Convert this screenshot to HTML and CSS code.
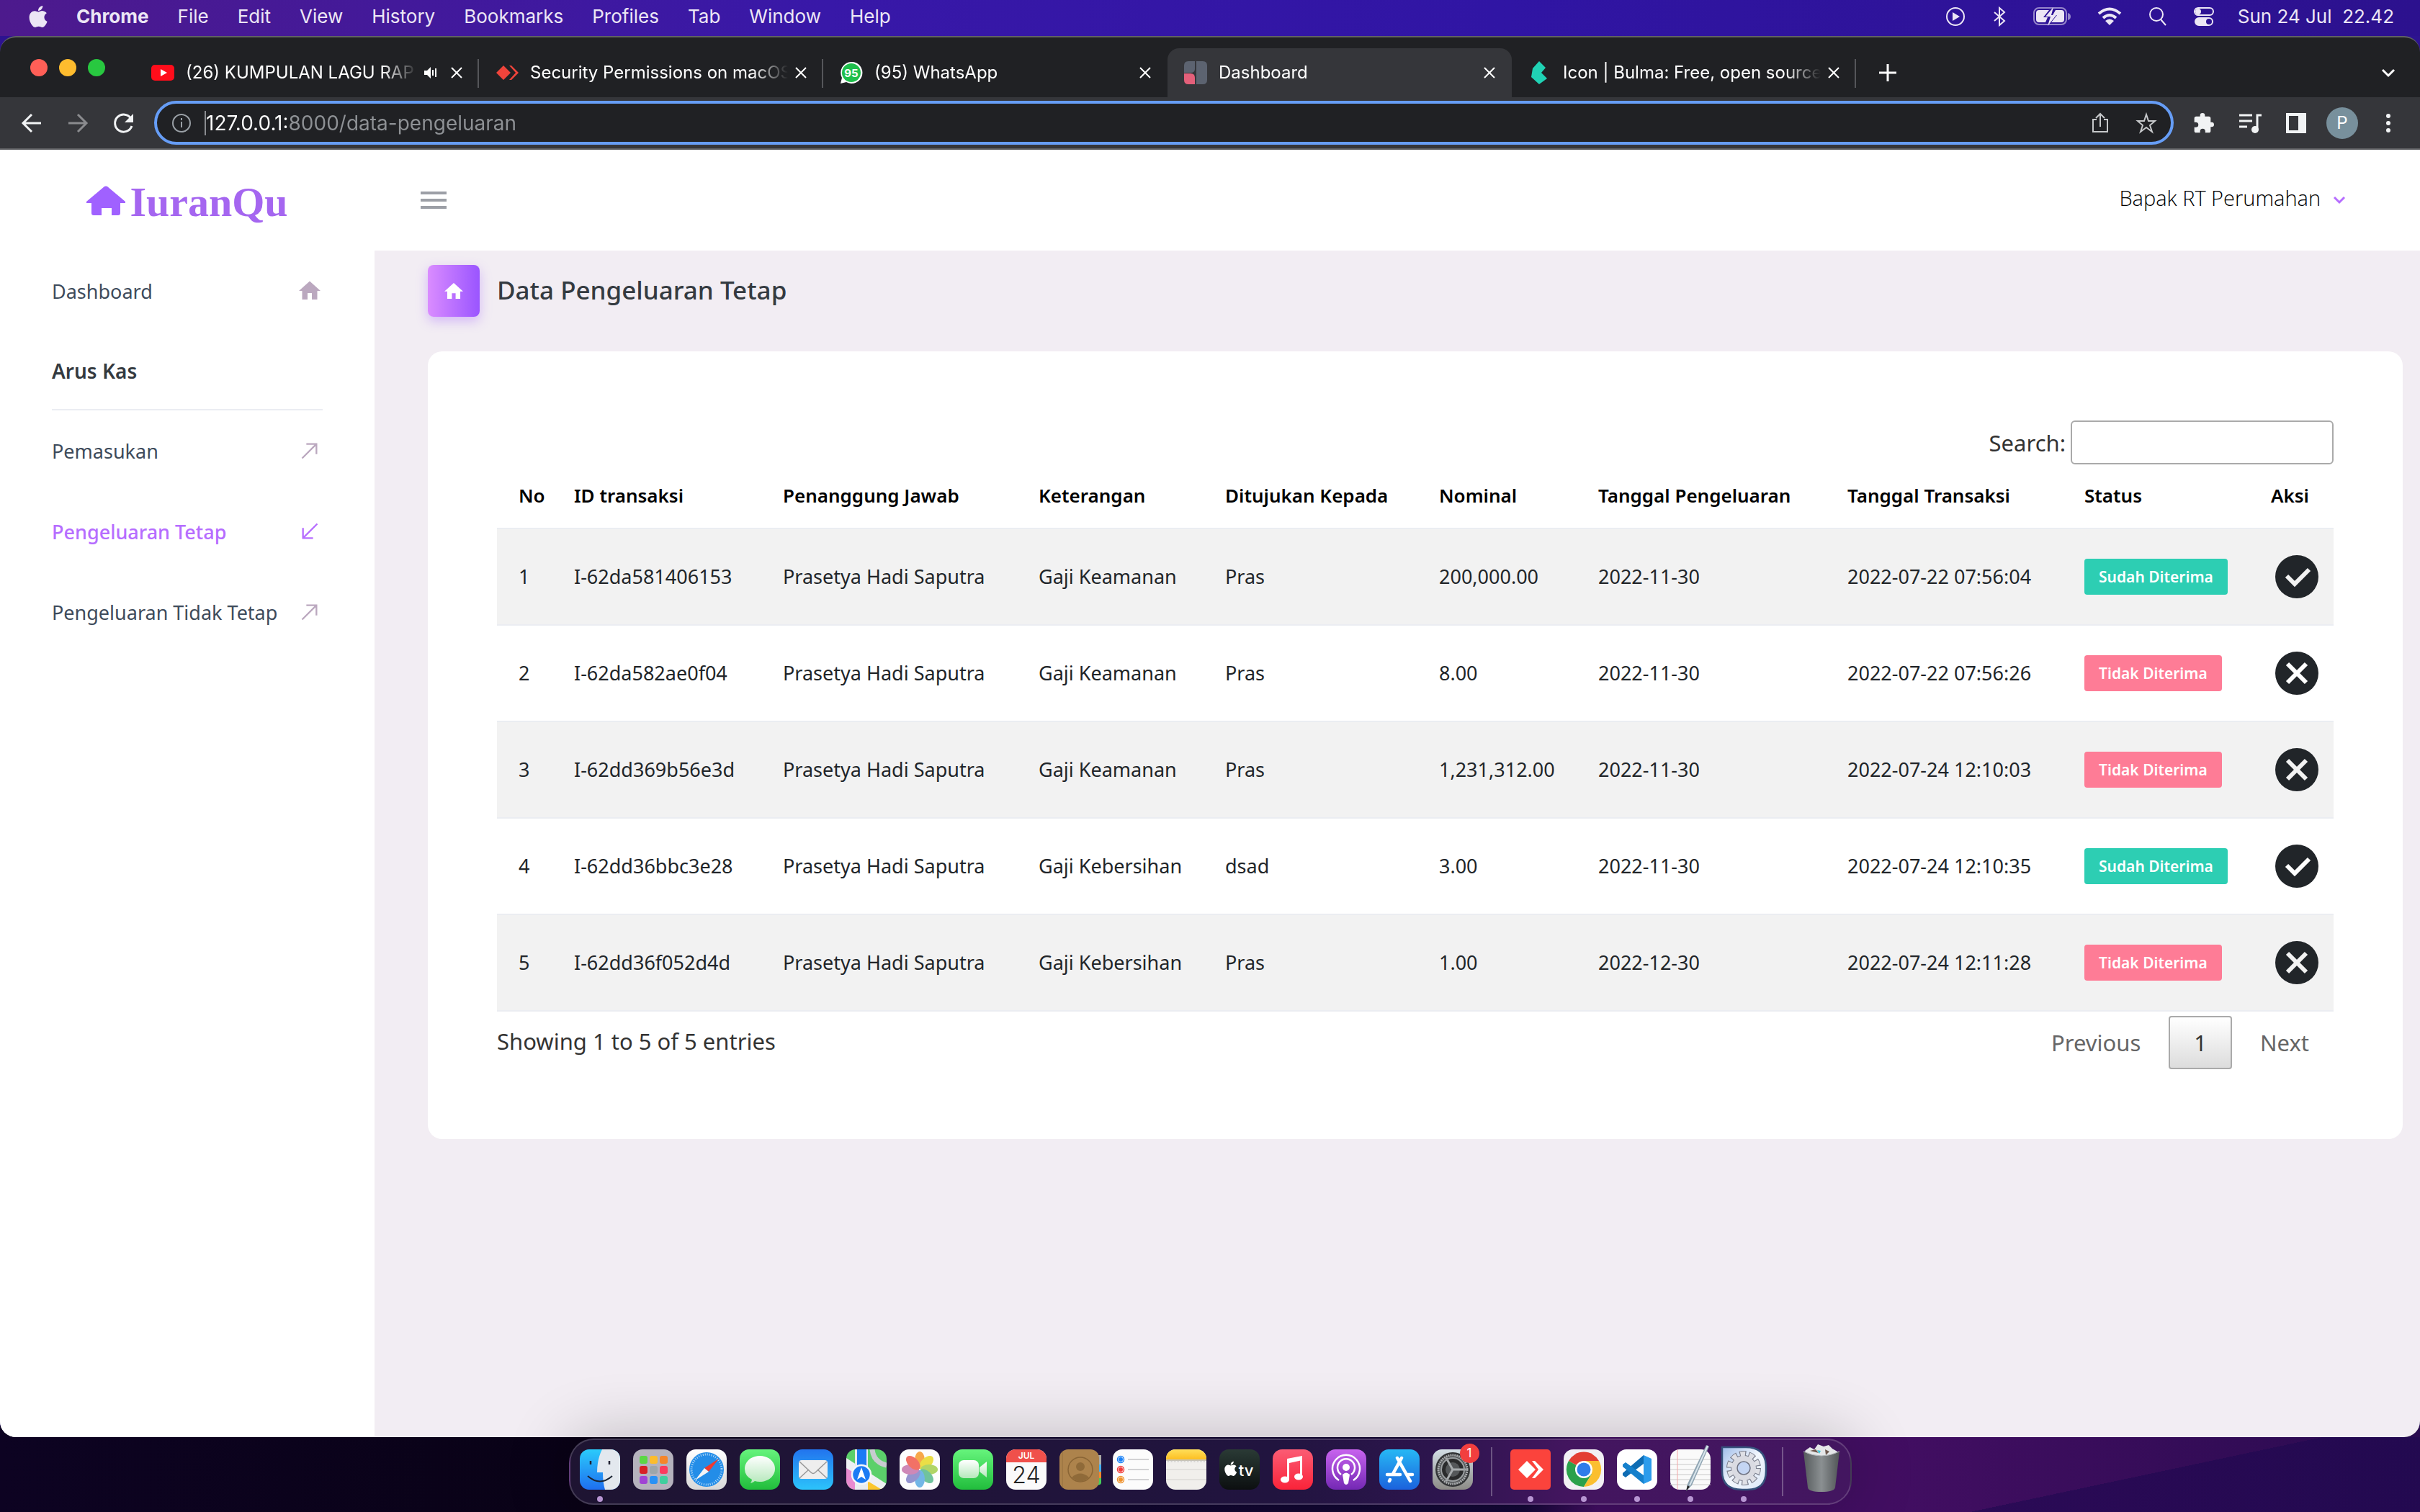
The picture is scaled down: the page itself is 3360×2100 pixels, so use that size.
FILE: index.html
```html
<!DOCTYPE html>
<html lang="id">
<head>
<meta charset="utf-8">
<title>Dashboard</title>
<link rel="stylesheet" href="styles.css">
</head>
<body>
<header class="menubar">
  <nav class="menus" aria-label="Menu bar">
    <svg class="apple" viewBox="0 0 384 480" aria-hidden="true"><path d="M319 252c0-37 16-64 50-85-19-27-47-42-84-45-35-3-74 21-88 21-15 0-49-20-76-20C66 124 6 168 6 257c0 26 5 54 14 82 13 37 59 127 107 125 25-1 43-18 76-18 32 0 48 18 76 18 49-1 90-82 102-119-65-31-62-90-62-93zM262 88c27-32 25-62 24-73-24 1-52 16-68 35-17 20-28 45-25 71 26 2 50-11 69-33z"/></svg>
    <button class="menu menu-app">Chrome</button>
    <button class="menu">File</button>
    <button class="menu">Edit</button>
    <button class="menu">View</button>
    <button class="menu">History</button>
    <button class="menu">Bookmarks</button>
    <button class="menu">Profiles</button>
    <button class="menu">Tab</button>
    <button class="menu">Window</button>
    <button class="menu">Help</button>
  </nav>
  <div class="status">
    <svg width="28" height="28" viewBox="0 0 28 28"><circle cx="14" cy="14" r="12" class="line"/><path d="M10 8l10 6-10 6z"/></svg>
    <svg width="20" height="28" viewBox="0 0 20 28"><path class="line" d="M3 8l14 12-7 6V2l7 6L3 20"/></svg>
    <svg width="52" height="28" viewBox="0 0 52 28"><rect x="1" y="2" width="45" height="23" rx="7" class="line dim"/><path class="dim-fill" d="M48 9q4 1 4 5t-4 5z"/><path d="M8 5h14l-8 10h6l-3 7H8q-4 0-4-4V9q0-4 4-4zM31 5h8q4 0 4 4v9q0 4-4 4H25l8-10h-6z"/><path d="M28 1L17 14h7l-4 13 12-15h-7z"/></svg>
    <svg width="34" height="26" viewBox="0 0 34 26"><path class="wave" d="M2 9q15-13 30 0M8 15q9-8 18 0"/><path d="M11 19q6-5 12 0l-6 6z"/></svg>
    <svg width="26" height="28" viewBox="0 0 26 28"><circle cx="11" cy="11" r="9" class="line"/><path class="line" d="M17 18l7 8"/></svg>
    <svg width="28" height="28" viewBox="0 0 28 28"><rect x="1" y="2" width="26" height="10" rx="5" class="line"/><circle cx="6" cy="7" r="4"/><path fill-rule="evenodd" d="M7 15h14a6 6 0 010 12H7a6 6 0 010-12zm14 2a4 4 0 100 8 4 4 0 000-8z"/></svg>
    <time class="clock">Sun 24 Jul&nbsp; 22.42</time>
  </div>
</header>

<div class="window">
  <div class="tabstrip">
    <div class="lights"><button class="light red" aria-label="Close"></button><button class="light amber" aria-label="Minimise"></button><button class="light green" aria-label="Zoom"></button></div>
    <div class="tabs">
      <div class="tab">
        <svg class="favicon" viewBox="0 0 32 32"><rect y="5" width="32" height="22" rx="5" fill="#ff0d1b"/><path d="M13 11l9 5-9 5z" fill="#fff"/></svg>
        <span class="tab-title">(26) KUMPULAN LAGU RAP</span>
        <svg class="speaker" viewBox="0 0 20 20"><path d="M1 7h4l5-5v16l-5-5H1z" fill="#fff"/><path d="M13 6v8M17 4v12" stroke="#fff" stroke-width="2"/></svg>
        <button class="close" aria-label="Close tab"><svg viewBox="0 0 20 20"><path d="M3 3l14 14M17 3L3 17"/></svg></button>
      </div>
      <div class="tab">
        <svg class="favicon" viewBox="0 0 32 32"><path d="M11 6l10 10-10 10L1 16zM19 6h3l10 10-10 10h-3l9-10z" fill="#ef443b"/></svg>
        <span class="tab-title">Security Permissions on macOS</span>
        <button class="close" aria-label="Close tab"><svg viewBox="0 0 20 20"><path d="M3 3l14 14M17 3L3 17"/></svg></button>
      </div>
      <div class="tab">
        <svg class="favicon" viewBox="0 0 32 32"><path d="M16 1a15 15 0 11-7 28l-8 2 2-8A15 15 0 0116 1z" fill="#fff"/><circle cx="16" cy="16" r="13" fill="#1fbf4c"/><text x="16" y="22" class="fav-count">95</text></svg>
        <span class="tab-title">(95) WhatsApp</span>
        <button class="close" aria-label="Close tab"><svg viewBox="0 0 20 20"><path d="M3 3l14 14M17 3L3 17"/></svg></button>
      </div>
      <div class="tab active">
        <svg class="favicon" viewBox="0 0 32 32"><path d="M6 0h9v11q0 5-6 5H0V6q0-6 6-6zM17 0h9q6 0 6 6v20q0 6-6 6h-9z" fill="#5c6370"/><path d="M0 17h9q6 0 6 6v9H6q-6 0-6-6z" fill="#e4607a"/></svg>
        <span class="tab-title">Dashboard</span>
        <button class="close" aria-label="Close tab"><svg viewBox="0 0 20 20"><path d="M3 3l14 14M17 3L3 17"/></svg></button>
      </div>
      <div class="tab">
        <svg class="favicon" viewBox="0 0 32 32"><path d="M6 10L15 0l9 9-6 7 8 8-11 8L4 22z" fill="#20d2b4"/></svg>
        <span class="tab-title">Icon | Bulma: Free, open source</span>
        <button class="close" aria-label="Close tab"><svg viewBox="0 0 20 20"><path d="M3 3l14 14M17 3L3 17"/></svg></button>
      </div>
    </div>
    <button class="strip-btn newtab" aria-label="New tab"><svg viewBox="0 0 24 24"><path d="M12 0v24M0 12h24"/></svg></button>
    <button class="strip-btn" aria-label="Search tabs"><svg viewBox="0 0 24 24"><path d="M4 8l8 8 8-8"/></svg></button>
  </div>

  <div class="toolbar">
    <button class="tool" aria-label="Back"><svg viewBox="0 0 32 32"><path d="M29 16H5M16 4L4 16l12 12"/></svg></button>
    <button class="tool faded" aria-label="Forward"><svg viewBox="0 0 32 32"><path d="M3 16h24M16 4l12 12-12 12"/></svg></button>
    <button class="tool" aria-label="Reload"><svg viewBox="0 0 32 32"><path d="M26 10A12 12 0 1027 20"/><path class="solid" d="M29 3v12H17z"/></svg></button>
    <div class="omnibox">
      <svg class="omni-icon" viewBox="0 0 28 28"><circle cx="14" cy="14" r="12"/><path d="M14 12v8M14 7v3"/></svg>
      <input class="url" type="text" aria-label="Address" value="127.0.0.1:8000/data-pengeluaran">
      <svg class="omni-icon bright" viewBox="0 0 28 28"><path d="M9 9H4v17h20V9h-5M14 19V2M8 7l6-6 6 6"/></svg>
      <svg class="omni-icon bright" viewBox="0 0 28 28"><path d="M14 2l3 9h9l-7 6 3 9-8-6-8 6 3-9-7-6h9z"/></svg>
    </div>
    <button class="tool" aria-label="Extensions"><svg viewBox="0 0 24 24"><path class="solid" d="M20 11h-1V7a2 2 0 00-2-2h-4V4a2.500 2.500 0 00-5 0v1H4a2 2 0 00-2 2v4h1.500a2.700 2.700 0 010 5.400H2V20a2 2 0 002 2h4v-1.500a2.700 2.700 0 015.400 0V22H17a2 2 0 002-2v-4h1a2.500 2.500 0 000-5z"/></svg></button>
    <button class="tool" aria-label="Media"><svg viewBox="0 0 32 32"><path d="M1 5h18M1 13h18M1 21h11M26 26V5h6"/><circle class="solid" cx="23" cy="25" r="5"/></svg></button>
    <button class="tool" aria-label="Side panel"><svg viewBox="0 0 32 32"><path class="solid" fill-rule="evenodd" d="M2 2h28v28H2zm4 4v20h13V6z"/></svg></button>
    <button class="avatar">P</button>
    <button class="tool" aria-label="More"><svg viewBox="0 0 32 32"><circle class="solid" cx="16" cy="6" r="3"/><circle class="solid" cx="16" cy="16" r="3"/><circle class="solid" cx="16" cy="26" r="3"/></svg></button>
  </div>

  <div class="page">
    <aside class="sidebar">
      <a class="brand" href="#"><svg viewBox="0 0 54 41"><path d="M25 1q2-1 4 0l25 21v2h-7v14q0 3-3 3H35V31H21v10H10q-3 0-3-3V24H0v-2z"/></svg><span>IuranQu</span></a>
      <nav class="side-nav">
        <a class="side-link" href="#">Dashboard<svg class="house" viewBox="0 0 24 24"><path d="M10,20V14H14V20H19V12H22L12,3L2,12H5V20H10Z"/></svg></a>
        <h2 class="side-head">Arus Kas</h2>
        <a class="side-link" href="#">Pemasukan<svg viewBox="0 0 24 24"><path d="M3 21L20 4M8 4h12v12"/></svg></a>
        <a class="side-link current" href="#">Pengeluaran Tetap<svg viewBox="0 0 24 24"><path d="M21 3L4 20M4 8v12h12"/></svg></a>
        <a class="side-link" href="#">Pengeluaran Tidak Tetap<svg viewBox="0 0 24 24"><path d="M3 21L20 4M8 4h12v12"/></svg></a>
      </nav>
    </aside>
    <div class="main">
      <div class="topbar">
        <button class="burger" aria-label="Toggle menu"><i></i><i></i><i></i></button>
        <button class="user">Bapak RT Perumahan<svg viewBox="0 0 16 10"><path d="M1 1l7 7 7-7"/></svg></button>
      </div>
      <main class="content">
        <div class="page-head"><span class="title-icon"><svg viewBox="2 3 20 17"><path d="M10,20V14H14V20H19V12H22L12,3L2,12H5V20H10Z"/></svg></span><h1>Data Pengeluaran Tetap</h1></div>
        <section class="card">
          <div class="filter"><label for="q">Search:</label><input id="q" type="search"></div>
          <table class="data">
            <colgroup><col class="c-no"><col class="c-id"><col class="c-person"><col class="c-note"><col class="c-to"><col class="c-sum"><col class="c-date"><col class="c-time"><col class="c-status"><col class="c-act"></colgroup>
            <thead><tr><th>No</th><th>ID transaksi</th><th>Penanggung Jawab</th><th>Keterangan</th><th>Ditujukan Kepada</th><th>Nominal</th><th>Tanggal Pengeluaran</th><th>Tanggal Transaksi</th><th>Status</th><th>Aksi</th></tr></thead>
            <tbody>
              <tr><td>1</td><td>I-62da581406153</td><td>Prasetya Hadi Saputra</td><td>Gaji Keamanan</td><td>Pras</td><td>200,000.00</td><td>2022-11-30</td><td>2022-07-22 07:56:04</td><td><span class="badge ok">Sudah Diterima</span></td><td><button class="act" aria-label="Terima"><svg viewBox="0 0 60 60"><circle cx="30" cy="30" r="30"/><path d="M16 29l11 11 20-20"/></svg></button></td></tr>
              <tr><td>2</td><td>I-62da582ae0f04</td><td>Prasetya Hadi Saputra</td><td>Gaji Keamanan</td><td>Pras</td><td>8.00</td><td>2022-11-30</td><td>2022-07-22 07:56:26</td><td><span class="badge no">Tidak Diterima</span></td><td><button class="act" aria-label="Tolak"><svg viewBox="0 0 60 60"><circle cx="30" cy="30" r="30"/><path d="M17 17l26 26M43 17L17 43"/></svg></button></td></tr>
              <tr><td>3</td><td>I-62dd369b56e3d</td><td>Prasetya Hadi Saputra</td><td>Gaji Keamanan</td><td>Pras</td><td>1,231,312.00</td><td>2022-11-30</td><td>2022-07-24 12:10:03</td><td><span class="badge no">Tidak Diterima</span></td><td><button class="act" aria-label="Tolak"><svg viewBox="0 0 60 60"><circle cx="30" cy="30" r="30"/><path d="M17 17l26 26M43 17L17 43"/></svg></button></td></tr>
              <tr><td>4</td><td>I-62dd36bbc3e28</td><td>Prasetya Hadi Saputra</td><td>Gaji Kebersihan</td><td>dsad</td><td>3.00</td><td>2022-11-30</td><td>2022-07-24 12:10:35</td><td><span class="badge ok">Sudah Diterima</span></td><td><button class="act" aria-label="Terima"><svg viewBox="0 0 60 60"><circle cx="30" cy="30" r="30"/><path d="M16 29l11 11 20-20"/></svg></button></td></tr>
              <tr><td>5</td><td>I-62dd36f052d4d</td><td>Prasetya Hadi Saputra</td><td>Gaji Kebersihan</td><td>Pras</td><td>1.00</td><td>2022-12-30</td><td>2022-07-24 12:11:28</td><td><span class="badge no">Tidak Diterima</span></td><td><button class="act" aria-label="Tolak"><svg viewBox="0 0 60 60"><circle cx="30" cy="30" r="30"/><path d="M17 17l26 26M43 17L17 43"/></svg></button></td></tr>
            </tbody>
          </table>
          <div class="table-foot">
            <p>Showing 1 to 5 of 5 entries</p>
            <nav class="pager" aria-label="Pages"><a href="#">Previous</a><a class="here" href="#">1</a><a href="#">Next</a></nav>
          </div>
        </section>
      </main>
    </div>
  </div>
</div>

<footer class="desk">
  <svg width="0" height="0" class="defs" aria-hidden="true"><defs>
    <linearGradient id="gBlue" x2="0" y2="1"><stop stop-color="#2bcbfb"/><stop offset="1" stop-color="#1e6ff0"/></linearGradient>
    <linearGradient id="gMail" x2="0" y2="1"><stop stop-color="#2274ee"/><stop offset="1" stop-color="#2cc4fb"/></linearGradient>
    <linearGradient id="gStore" x2="0" y2="1"><stop stop-color="#27b8f4"/><stop offset="1" stop-color="#1b62dd"/></linearGradient>
    <linearGradient id="gGreen" x2="0" y2="1"><stop stop-color="#66f47c"/><stop offset="1" stop-color="#21bd3c"/></linearGradient>
    <linearGradient id="gWhite" x2="0" y2="1"><stop stop-color="#fff"/><stop offset="1" stop-color="#d8d8d8"/></linearGradient>
    <linearGradient id="gBubble" x2="0" y2="1"><stop stop-color="#fff"/><stop offset="1" stop-color="#b5e8bb"/></linearGradient>
    <linearGradient id="gMusic" x2="0" y2="1"><stop stop-color="#fb5c74"/><stop offset="1" stop-color="#fa2339"/></linearGradient>
    <linearGradient id="gPod" x2="0" y2="1"><stop stop-color="#c863ee"/><stop offset="1" stop-color="#7428b4"/></linearGradient>
    <linearGradient id="gNote" x2="0" y2="1"><stop stop-color="#ffdf5a"/><stop offset="1" stop-color="#fdbf22"/></linearGradient>
    <linearGradient id="gTv" x2="0" y2="1"><stop stop-color="#2a3a35"/><stop offset="1" stop-color="#0c0f10"/></linearGradient>
    <linearGradient id="gBin"><stop stop-color="#555a5c"/><stop offset=".5" stop-color="#8b9092"/><stop offset="1" stop-color="#505456"/></linearGradient>
    <linearGradient id="gCog" x2="0" y2="1"><stop stop-color="#d3dfe6"/><stop offset="1" stop-color="#8c8b86"/></linearGradient>
    <linearGradient id="gLeaf" x2="1" y2="1"><stop stop-color="#9fbdea"/><stop offset=".5" stop-color="#f3f7fd"/><stop offset="1" stop-color="#dbe7f8"/></linearGradient>
    <clipPath id="sq"><rect width="56" height="56" rx="13"/></clipPath>
  </defs></svg>
  <div class="dock">
    <a class="app running" href="#" aria-label="Finder"><svg viewBox="0 0 56 56"><g clip-path="url(#sq)"><rect width="56" height="56" fill="url(#gBlue)"/><path d="M31 0q-7 14-7 32h8q0 14 3 24h21V0z" fill="#e3e8ee"/></g><path d="M15 16v5M41 16v5" stroke="#223" stroke-width="2.500"/><path d="M11 37q17 15 34 0" fill="none" stroke="#1a2433" stroke-width="2"/></svg></a>
    <a class="app" href="#" aria-label="Launchpad"><svg viewBox="0 0 56 56"><rect width="56" height="56" rx="13" fill="#b5b2bd"/><g><rect x="9" y="9" width="11" height="11" rx="3" fill="#5bd746"/><rect x="23" y="9" width="11" height="11" rx="3" fill="#fcbc2d"/><rect x="37" y="9" width="11" height="11" rx="3" fill="#f5862b"/><rect x="9" y="23" width="11" height="11" rx="3" fill="#d81f26"/><rect x="23" y="23" width="11" height="11" rx="3" fill="#9ea6aa"/><rect x="37" y="23" width="11" height="11" rx="3" fill="#fb3b5f"/><rect x="9" y="37" width="11" height="11" rx="3" fill="#a043d4"/><rect x="23" y="37" width="11" height="11" rx="3" fill="#2a91f5"/><rect x="37" y="37" width="11" height="11" rx="3" fill="#3fcf9e"/></g></svg></a>
    <a class="app" href="#" aria-label="Safari"><svg viewBox="0 0 56 56"><rect width="56" height="56" rx="13" fill="url(#gWhite)"/><circle cx="28" cy="28" r="24" fill="#238de8"/><circle cx="28" cy="28" r="21" fill="none" stroke="#b8dcf8" stroke-width="3" stroke-dasharray="1 2"/><path d="M45 13L25 26l6 5z" fill="#f0392f"/><path d="M12 43l13-17 6 5z" fill="#f4f4f6"/></svg></a>
    <a class="app" href="#" aria-label="Messages"><svg viewBox="0 0 56 56"><rect width="56" height="56" rx="13" fill="url(#gGreen)"/><path d="M28 9c12 0 21 8 21 18s-9 18-21 18q-4 0-7-1-2 2-6 3 2-3 2-5Q7 37 7 27C7 17 16 9 28 9z" fill="url(#gBubble)"/></svg></a>
    <a class="app" href="#" aria-label="Mail"><svg viewBox="0 0 56 56"><rect width="56" height="56" rx="13" fill="url(#gMail)"/><rect x="8" y="15" width="40" height="26" rx="4" fill="#eee"/><path d="M9 17l16 15q3 3 6 0l16-15M9 40l13-12M47 40L34 28" fill="none" stroke="#999" stroke-width="1.500"/></svg></a>
    <a class="app" href="#" aria-label="Maps"><svg viewBox="0 0 56 56"><g clip-path="url(#sq)"><rect width="56" height="56" fill="#5bd06a"/><path d="M0 25l14 6v25H0z" fill="#e88ad0"/><path d="M30 40l26 16H30z" fill="#fcc62d"/><path d="M0 12l56 36v12L0 26z" fill="#eef0f3"/><path d="M36 0q2 18 20 22" stroke="#c8ccd0" stroke-width="7" fill="none"/><path d="M12 0h18v56H12z" fill="#e9ecf0"/><path d="M15 0h13v24H15z" fill="#1b7bf4"/><circle cx="21" cy="35" r="13" fill="#1b7bf4" stroke="#f4f6fa" stroke-width="2.500"/><path d="M21 25l6 17-6-4-6 4z" fill="#fff"/></g></svg></a>
    <a class="app" href="#" aria-label="Photos"><svg viewBox="0 0 56 56"><rect width="56" height="56" rx="13" fill="#fdfdfd"/><g class="petals"><ellipse cx="28" cy="15" rx="7" ry="12" fill="#f79a2b"/><ellipse cx="28" cy="15" rx="7" ry="12" fill="#e8d927" transform="rotate(45 28 28)"/><ellipse cx="28" cy="15" rx="7" ry="12" fill="#a3cf4d" transform="rotate(90 28 28)"/><ellipse cx="28" cy="15" rx="7" ry="12" fill="#58b98d" transform="rotate(135 28 28)"/><ellipse cx="28" cy="15" rx="7" ry="12" fill="#5aaae3" transform="rotate(180 28 28)"/><ellipse cx="28" cy="15" rx="7" ry="12" fill="#8484c8" transform="rotate(225 28 28)"/><ellipse cx="28" cy="15" rx="7" ry="12" fill="#c674ab" transform="rotate(270 28 28)"/><ellipse cx="28" cy="15" rx="7" ry="12" fill="#f1594c" transform="rotate(315 28 28)"/></g></svg></a>
    <a class="app" href="#" aria-label="FaceTime"><svg viewBox="0 0 56 56"><rect width="56" height="56" rx="13" fill="url(#gGreen)"/><rect x="8" y="15" width="28" height="25" rx="7" fill="url(#gBubble)"/><path d="M37 25l10-8v22l-10-8z" fill="url(#gBubble)"/></svg></a>
    <a class="app" href="#" aria-label="Calendar"><svg viewBox="0 0 56 56"><g clip-path="url(#sq)"><rect width="56" height="56" fill="#fafafa"/><rect width="56" height="18" fill="#f0504b"/></g><text x="28" y="13" class="cal-month">JUL</text><text x="28" y="47" class="cal-day">24</text></svg></a>
    <a class="app" href="#" aria-label="Contacts"><svg viewBox="0 0 56 56"><path d="M50 8h8v13h-8z" fill="#a9a9a6"/><path d="M50 21h8v10h-8z" fill="#43aef0"/><path d="M50 31h8v9h-8z" fill="#f5862b"/><path d="M50 40h8v6q0 4-8 4z" fill="#46cf5a"/><rect width="55" height="56" rx="12" fill="#ad834c"/><circle cx="29" cy="28" r="17" fill="none" stroke="#8a6535" stroke-width="1.500"/><circle cx="29" cy="24" r="6" fill="#8f6a39"/><path d="M17 39q12-11 24 0-12 11-24 0z" fill="#8f6a39"/><path d="M4 3v50" stroke="#94703f"/></svg></a>
    <a class="app" href="#" aria-label="Reminders"><svg viewBox="0 0 56 56"><rect width="56" height="56" rx="13" fill="#fcfcfc"/><path d="M21 14h29M21 28h29M21 42h29" stroke="#c4c4c6" stroke-width="1.500"/><g fill="none" stroke-width="1.500"><circle cx="11" cy="14" r="4.500" stroke="#1a82f7"/><circle cx="11" cy="28" r="4.500" stroke="#f23c3a"/><circle cx="11" cy="42" r="4.500" stroke="#f0922b"/></g><circle cx="11" cy="14" r="3" fill="#1a82f7"/><circle cx="11" cy="28" r="3" fill="#f23c3a"/><circle cx="11" cy="42" r="3" fill="#f0922b"/></svg></a>
    <a class="app" href="#" aria-label="Notes"><svg viewBox="0 0 56 56"><g clip-path="url(#sq)"><rect width="56" height="56" fill="#f1efec"/><rect width="56" height="14" fill="url(#gNote)"/></g><path d="M0 15h56" stroke="#b9b4a6" stroke-width="1.500"/><path d="M1 17h54" stroke="#bbb" stroke-dasharray="1 1"/><path d="M0 28h56M0 42h56" stroke="#d3d1cd"/></svg></a>
    <a class="app" href="#" aria-label="TV"><svg viewBox="0 0 56 56"><rect width="56" height="56" rx="13" fill="url(#gTv)"/><g transform="translate(7 16) scale(.045)"><path fill="#fff" d="M319 252c0-37 16-64 50-85-19-27-47-42-84-45-35-3-74 21-88 21-15 0-49-20-76-20C66 124 6 168 6 257c0 26 5 54 14 82 13 37 59 127 107 125 25-1 43-18 76-18 32 0 48 18 76 18 49-1 90-82 102-119-65-31-62-90-62-93zM262 88c27-32 25-62 24-73-24 1-52 16-68 35-17 20-28 45-25 71 26 2 50-11 69-33z"/></g><text x="37" y="37" class="tv-text">tv</text></svg></a>
    <a class="app" href="#" aria-label="Music"><svg viewBox="0 0 56 56"><rect width="56" height="56" rx="13" fill="url(#gMusic)"/><path d="M20 13l21-4v6l-18 4v23h-3z" fill="#fff"/><path d="M38 10h3v27h-3z" fill="#fff"/><ellipse cx="17" cy="42" rx="6" ry="4.500" fill="#fff"/><ellipse cx="36" cy="38" rx="6" ry="4.500" fill="#fff"/></svg></a>
    <a class="app" href="#" aria-label="Podcasts"><svg viewBox="0 0 56 56"><rect width="56" height="56" rx="13" fill="url(#gPod)"/><g fill="none" stroke="#fff" stroke-width="2.500"><path d="M18 43a19 19 0 1120 0M21 35a12 12 0 1114 0"/></g><circle cx="28" cy="25" r="5" fill="#fff"/><path d="M23 35q5-5 10 0l-2 12q-3 4-6 0z" fill="#fff"/></svg></a>
    <a class="app" href="#" aria-label="App Store"><svg viewBox="0 0 56 56"><rect width="56" height="56" rx="13" fill="url(#gStore)"/><g fill="none" stroke="#fff" stroke-width="4.500" stroke-linecap="round"><path d="M31 12L19 34M25 12l18 32M11 35h18M39 35h7M15 42l-1 2"/></g></svg></a>
    <a class="app" href="#" aria-label="System Preferences"><svg viewBox="0 0 56 56"><rect width="56" height="56" rx="13" fill="url(#gCog)"/><circle cx="28" cy="28" r="24" fill="#333537"/><circle cx="28" cy="28" r="20" fill="#55585a" stroke="#a9acae" stroke-width="3" stroke-dasharray="2 1"/><circle cx="28" cy="28" r="13" fill="none" stroke="#2a2b2c" stroke-width="6"/><g stroke="#a7abad" stroke-width="3"><path d="M28 28h18M28 28L19 12M28 28l-9 16"/></g><circle cx="28" cy="28" r="16" fill="none" stroke="#9a9ea0" stroke-width="2"/></svg><span class="count">1</span></a>
    <span class="divider"></span>
    <a class="app running" href="#" aria-label="AnyDesk"><svg viewBox="0 0 56 56"><rect width="56" height="56" rx="5" fill="#fb433c"/><path d="M23 16l12 12-12 12-12-12zM30 16h4l12 12-12 12h-4l9-12z" fill="#fff"/></svg></a>
    <a class="app running" href="#" aria-label="Chrome"><svg viewBox="0 0 56 56"><rect width="56" height="56" rx="13" fill="#f2f0f4"/><path d="M28 28L7 16a24 24 0 0142 0z" fill="#e33f33"/><path d="M28 28L7 16a24 24 0 0021 36l11-18z" fill="#2ba14b"/><path d="M28 28l11 6-11 18A24 24 0 0049 16H28z" fill="#fbbf2f"/><circle cx="28" cy="28" r="12" fill="#fff"/><circle cx="28" cy="28" r="9.500" fill="#2f7de9"/></svg></a>
    <a class="app running" href="#" aria-label="Visual Studio Code"><svg viewBox="0 0 56 56"><rect width="56" height="56" rx="13" fill="#fff"/><path d="M37 8v12L12 39l-4-3v-3z" fill="#0e6cb3"/><path d="M37 48V36L12 18l-4 3v3z" fill="#1580cc"/><path d="M37 8l11 5v30l-11 5z" fill="#2c9cec"/></svg></a>
    <a class="app running" href="#" aria-label="TextEdit"><svg viewBox="0 0 56 56"><rect width="56" height="56" rx="13" fill="#fafafa"/><path d="M0 14h56M0 21h56M0 28h56M0 35h56M0 42h56M0 49h56" stroke="#c9c9c9"/><path d="M10 0v56" stroke="#f3a6a6"/><path d="M50-6l4 2-24 54-8 8 2-10z" fill="#8fa4b2"/><path d="M52-5L27 50" stroke="#d9e5ec" stroke-width="2"/><path d="M22 58l2-8 3 2z" fill="#222"/></svg></a>
    <a class="app running" href="#" aria-label="Utility"><svg viewBox="0 0 56 56"><path d="M-2-3h33q28 0 28 28v5q0 26-26 26h-7Q-2 56-2 30z" fill="url(#gLeaf)" stroke="#36527c" stroke-width="2.500"/><circle cx="28" cy="26" r="19" fill="none" stroke="#7b7f8e" stroke-width="10" stroke-dasharray="8.500 3.440"/><circle cx="28" cy="26" r="18" fill="#7b7f8e"/><circle cx="28" cy="26" r="18" fill="none" stroke="#dfe0e6" stroke-width="10" stroke-dasharray="6 5.310" stroke-dashoffset="-1"/><circle cx="28" cy="26" r="13" fill="#c3d5f3" stroke="#dadbe2" stroke-width="8"/><circle cx="28" cy="26" r="9" fill="#c4d5f3" stroke="#6f7383" stroke-width="1.500"/></svg></a>
    <span class="divider"></span>
    <a class="app" href="#" aria-label="Trash"><svg viewBox="0 0 56 56"><path d="M5 2l7-5 6 3 5-7 8 3 7-2 5 5 7 4-3 7H8z" fill="#e4e6e8"/><path d="M12 2l8-2 4 5zM33 0l6 3-5 5z" fill="#6e5a50"/><path d="M22 1l5 1-2 4z" fill="#3bc4d8"/><path d="M3 3q25 12 50 0l-6 50q-1 6-19 6T9 53z" fill="url(#gBin)"/><path d="M3 3q25 12 50 0" fill="none" stroke="#aeb3b6"/></svg></a>
  </div>
</footer>
</body>
</html>
```
FILE: styles.css
```css
* { box-sizing: border-box; }

body {
  margin: 0;
  min-height: 100vh;
  display: flex;
  flex-direction: column;
  font-family: "Noto Sans", "Open Sans", sans-serif;
  background:
    linear-gradient(168deg, transparent 50%, rgba(30, 8, 80, .6) 50%) right bottom / 760px 104px no-repeat,
    linear-gradient(90deg, #0d0322 0%, #090216 24%, #10062e 45%, #150838 63%, #430e64 66%, #420e62 78%, #2a0b50 100%) bottom / 100% 120px no-repeat,
    #2d1390;
}

h1, h2, p { margin: 0; }
a { color: inherit; text-decoration: none; }
button { margin: 0; padding: 0; border: 0; background: none; font: inherit; color: inherit; }
svg { display: block; flex: none; overflow: visible; }

/* macOS menu bar */
.menubar {
  display: flex;
  justify-content: space-between;
  align-items: center;
  height: 50px;
  padding: 0 36px 4px 40px;
  font: 26px/32px Inter, "Liberation Sans", sans-serif;
  color: #ece6f5;
  background: linear-gradient(90deg, #4d1a8d 0%, #3818a8 34%, #3015a4 62%, #2c118e 100%);
}
.menus, .status { display: flex; align-items: center; }
.menus { gap: 40px; }
.menubar svg { fill: currentColor; }
.menubar .line { fill: none; stroke: currentColor; stroke-width: 2; }
.menubar .wave { fill: none; stroke: currentColor; stroke-width: 4; }
.menubar .dim { opacity: .55; }
.menubar .dim-fill { opacity: .55; }
.apple { width: 26px; height: 32px; }
.menu-app { font-weight: 700; }
.status { gap: 37px; }
.clock { margin-left: -4px; }

/* Browser window */
.window {
  flex: 1;
  display: flex;
  flex-direction: column;
  overflow: hidden;
  border-top: 2px solid #606164;
  border-radius: 22px;
  background: #202124;
}
.tabstrip {
  display: flex;
  height: 83px;
  color: #fff;
  font: 24px/32px Inter, "Liberation Sans", sans-serif;
}
.lights { display: flex; gap: 16px; width: 187px; padding: 30px 0 0 42px; }
.light { width: 24px; height: 24px; border-radius: 50%; }
.red { background: #ff5f57; }
.amber { background: #febc2e; }
.green { background: #28c840; }
.tabs { display: flex; flex: 0 1 2390px; padding-top: 15px; min-width: 0; }
.tab {
  position: relative;
  flex: 1;
  min-width: 0;
  display: flex;
  align-items: center;
  gap: 16px;
  padding: 0 21px 0 23px;
}
.tab::after {
  content: "";
  position: absolute;
  right: 0;
  top: 15px;
  width: 2px;
  height: 40px;
  background: #55565a;
}
.tab:has(+ .active)::after, .tab.active::after { display: none; }
.tab.active { background: #35363a; border-radius: 16px 16px 0 0; }
.favicon { width: 32px; height: 32px; }
.fav-count { font: 700 15px Inter, sans-serif; fill: #fff; text-anchor: middle; }
.tab-title {
  flex: 1;
  margin-right: -8px;
  overflow: hidden;
  white-space: nowrap;
  mask-image: linear-gradient(90deg, #000 calc(100% - 50px), transparent);
}
.speaker { width: 20px; height: 20px; }
.close svg { width: 20px; height: 20px; }
.close path { fill: none; stroke: #fff; stroke-width: 2; }
.strip-btn path { fill: none; stroke: #fff; stroke-width: 3; }
.strip-btn { display: grid; place-items: center; width: 88px; padding-top: 15px; }
.strip-btn svg { width: 24px; height: 24px; }
.newtab { margin-right: auto; }

.toolbar {
  display: flex;
  align-items: center;
  gap: 32px;
  height: 73px;
  padding: 0 28px;
  background: #35363a;
  border-bottom: 2px solid #606164;
}
.tool svg { width: 32px; height: 32px; fill: none; stroke: #f1f3f4; stroke-width: 3; }
.tool .solid { fill: #f1f3f4; stroke: none; }
.faded { opacity: .45; }
.omnibox {
  flex: 1;
  display: flex;
  align-items: center;
  gap: 18px;
  height: 61px;
  margin: 0 -6px 0 -6px;
  padding: 0 20px;
  border: 4px solid #669df6;
  border-radius: 31px;
  background: #202124;
}
.omni-icon { width: 28px; height: 28px; fill: none; stroke: #9aa0a6; stroke-width: 2; }
.omni-icon.bright { stroke: #c6c8ca; margin-left: 18px; }
.url {
  flex: 1;
  height: 34px;
  padding: 0;
  border: 0;
  border-left: 2px solid #8a8c90;
  outline: 0;
  font: 28px/34px Inter, "Liberation Sans", sans-serif;
  color: transparent;
  background: linear-gradient(90deg, #fff 112px, #8e9195 112px) text;
}
.avatar {
  width: 44px;
  height: 44px;
  margin: 0 -6px;
  border-radius: 50%;
  background: #78909c;
  color: #fff;
  font: 24px/44px Inter, sans-serif;
}

/* Dashboard */
.page { flex: 1; display: flex; background: #f2edf3; }
.sidebar { width: 520px; flex: none; background: #fff; }
.brand {
  display: flex;
  align-items: center;
  justify-content: center;
  gap: 6px;
  height: 140px;
  padding-top: 6px;
  color: #a566f0;
  font: 700 58px/60px "Liberation Serif", serif;
}
.brand svg { width: 54px; height: 41px; margin-bottom: 6px; fill: #a061ff; }
.side-nav { display: flex; flex-direction: column; padding: 0 72px; font-size: 27px; color: #3e4b5b; }
.side-link { display: flex; align-items: center; justify-content: space-between; height: 112px; white-space: nowrap; }
.side-link svg { width: 28px; height: 28px; margin-right: 4px; fill: none; stroke: #bba8bf; stroke-width: 2; }
.side-link .house { width: 36px; height: 36px; margin-right: 0; fill: #bba8bf; stroke: none; }
.side-link.current { color: #b66dff; font-weight: 500; }
.side-link.current svg { stroke: #b66dff; }
.side-head { height: 110px; border-bottom: 2px solid #ebedf2; font-size: 28px; line-height: 110px; font-weight: 600; color: #343a40; }

.main { flex: 1; min-width: 0; }
.topbar {
  display: flex;
  align-items: center;
  justify-content: space-between;
  height: 140px;
  padding: 0 104px 0 64px;
  background: #fff;
}
.burger { display: flex; flex-direction: column; gap: 6px; width: 36px; }
.burger i { height: 4px; background: #9c9fa6; }
.user { display: flex; align-items: center; gap: 18px; padding-bottom: 6px; font: 300 29px/40px "Open Sans", "Noto Sans", sans-serif; color: #000; }
.user svg { width: 16px; height: 10px; margin-top: 6px; fill: none; stroke: #b66dff; stroke-width: 3; }

.content { padding: 20px 24px 0 74px; }
.page-head { display: flex; align-items: center; gap: 24px; }
.page-head h1 { padding-bottom: 2px; font-size: 35px; line-height: 48px; font-weight: 500; color: #343a40; }
.title-icon {
  display: grid;
  place-items: center;
  width: 72px;
  height: 72px;
  border-radius: 8px;
  background: linear-gradient(90deg, #da8cff, #9a55ff);
  box-shadow: 0 6px 16px rgba(154, 85, 255, .35);
}
.title-icon svg { width: 26px; height: 22px; fill: #fff; }
.card { margin-top: 48px; padding: 96px 96px 97px; border-radius: 20px; background: #fff; }
.filter { display: flex; justify-content: flex-end; align-items: center; gap: 7px; font-size: 31px; color: #333; }
.filter input { width: 365px; height: 61px; border: 2px solid #aaa; border-radius: 6px; font: inherit; padding: 10px; }

.data { width: 100%; table-layout: fixed; border-collapse: collapse; font-size: 27px; line-height: 36px; color: #212529; }
.c-no { width: 77px; }
.c-id { width: 290px; }
.c-person { width: 355px; }
.c-note { width: 259px; }
.c-to { width: 297px; }
.c-sum { width: 221px; }
.c-date { width: 346px; }
.c-time { width: 329px; }
.c-status { width: 259px; }
.c-act { width: 117px; }
.data th { height: 89px; padding: 0 0 2px 30px; text-align: left; font-size: 26px; font-weight: 600; color: #000; white-space: nowrap; }
.data td { height: 134px; padding: 0 0 0 30px; border-top: 2px solid #ebedf2; white-space: nowrap; }
.data tbody tr { border-bottom: 2px solid #ebedf2; }
.data tbody tr:nth-child(odd) { background: #f2f2f2; }
.badge { display: inline-block; vertical-align: middle; padding: 0 20px; border-radius: 4px; color: #fff; font-size: 21px; font-weight: 600; line-height: 50px; }
.ok { background: #2dceb3; }
.no { background: #fe7c96; }
.act { display: block; margin-left: 6px; }
.act svg { width: 60px; height: 60px; fill: #212529; }
.act path { fill: none; stroke: #fff; stroke-width: 6; }
tr:nth-child(odd) .act path { stroke: #f2f2f2; }

.table-foot { display: flex; justify-content: space-between; align-items: flex-start; padding-top: 6px; font-size: 31px; line-height: 40px; color: #333; }
.table-foot p { padding-top: 15px; }
.pager { display: flex; gap: 5px; color: #666; }
.pager a { padding: 17px 34px; }
.pager .here { border: 2px solid #aaa; border-radius: 4px; padding: 15px 33px; color: #333; background: linear-gradient(#fff, #dcdcdc); }

/* Dock */
.desk { position: relative; z-index: 1; display: flex; justify-content: center; padding: 2px 0 10px; }
.defs { position: absolute; }
.dock {
  display: flex;
  gap: 18px;
  height: 92px;
  padding: 13px 12px 13px 13px;
  border: 2px solid rgba(255, 255, 255, .17);
  border-radius: 34px;
  background: linear-gradient(90deg, #1e1432 0%, #21143f 55%, #2d154e 68%, #43155f 78%, #431660 100%);
  box-shadow: 0 0 90px rgba(0, 0, 0, .24);
}
.app { position: relative; width: 56px; height: 56px; }
.app svg { width: 56px; height: 56px; }
.running::after {
  content: "";
  position: absolute;
  left: 24px;
  top: 65px;
  width: 8px;
  height: 8px;
  border-radius: 50%;
  background: #b795d2;
}
.divider { width: 2px; height: 68px; margin: -3px 7px 0; background: rgba(255, 255, 255, .27); }
.petals { opacity: .85; }
.cal-month { font: 600 12px Inter, sans-serif; fill: #fff; text-anchor: middle; }
.cal-day { font: 300 32px Inter, sans-serif; fill: #222; text-anchor: middle; }
.tv-text { font: 500 22px Inter, sans-serif; fill: #fff; text-anchor: middle; }
.count {
  position: absolute;
  right: -9px;
  top: -8px;
  width: 27px;
  height: 27px;
  border-radius: 50%;
  background: #f23f3e;
  color: #fff;
  font: 17px/27px Inter, sans-serif;
  text-align: center;
}
```
